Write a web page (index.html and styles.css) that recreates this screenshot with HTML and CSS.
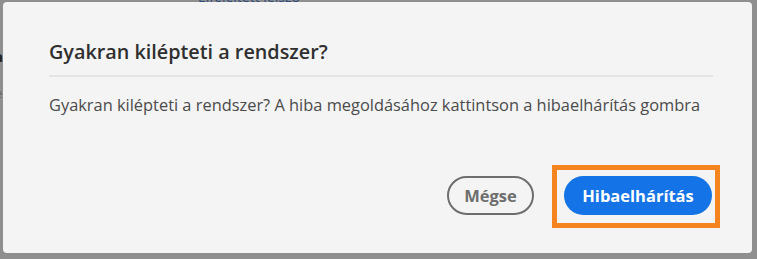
FILE: index.html
```html
<!DOCTYPE html>
<html lang="hu">
<head>
<meta charset="utf-8">
<link rel="stylesheet" href="styles.css">
</head>
<body>
<div class="backdrop">
  <span class="peek-top">Elfelejtett jelszó</span>
  <span class="peek-a">a</span>
  <span class="peek-e">e</span>
  <div class="dialog">
    <h2 class="title">Gyakran kilépteti a rendszer?</h2>
    <p class="message">Gyakran kilépteti a rendszer? A hiba megoldásához kattintson a hibaelhárítás gombra</p>
    <div class="actions">
      <button class="btn btn-secondary">Mégse</button>
      <button class="btn btn-primary">Hibaelhárítás</button>
    </div>
    <div class="highlight"></div>
  </div>
</div>
</body>
</html>
```
FILE: styles.css
```css
html, body {
  margin: 0;
  padding: 0;
}
body {
  background: #8f8f8f;
  width: 757px;
  height: 259px;
  overflow: hidden;
  font-family: "Open Sans", "Noto Sans", sans-serif;
}
.backdrop {
  position: relative;
  padding: 2px 5px 0 3px;
}
.peek-top {
  position: absolute;
  left: 198px;
  top: -13px;
  font-size: 14px;
  color: #2c4a7a;
}
.peek-a {
  position: absolute;
  left: -6px;
  top: 46px;
  font-size: 15px;
  font-weight: 700;
  color: #222;
}
.peek-e {
  position: absolute;
  left: -5px;
  top: 84px;
  font-size: 13px;
  color: #666;
}
.dialog {
  position: relative;
  width: 749px;
  height: 251px;
  box-sizing: border-box;
  background: #f4f4f4;
  border-radius: 4px;
  padding: 37px 39px 0 46px;
}
.title {
  margin: 0;
  font-size: 19.8px;
  line-height: 26px;
  font-weight: 600;
  color: #2f2f2f;
  padding-bottom: 10px;
  border-bottom: 2px solid #e4e4e4;
}
.message {
  margin: 17px 0 0;
  font-size: 16.4px;
  line-height: 22px;
  color: #4b4b4b;
}
.actions {
  display: flex;
  justify-content: flex-end;
  gap: 30px;
  margin-top: 60px;
  padding-right: 1px;
}
.btn {
  font-family: "Open Sans", "Noto Sans", sans-serif;
  font-size: 16.5px;
  font-weight: 700;
  height: 39px;
  padding: 0;
  border-radius: 20px;
  box-sizing: border-box;
  cursor: pointer;
}
.btn-secondary {
  width: 87px;
  background: transparent;
  border: 2px solid #6e6e6e;
  color: #6e6e6e;
}
.btn-primary {
  width: 148px;
  background: #1473e6;
  border: none;
  color: #fff;
}
.highlight {
  position: absolute;
  left: 549px;
  top: 163px;
  width: 168px;
  height: 63px;
  box-sizing: border-box;
  border: 5px solid #f5841f;
}
```
